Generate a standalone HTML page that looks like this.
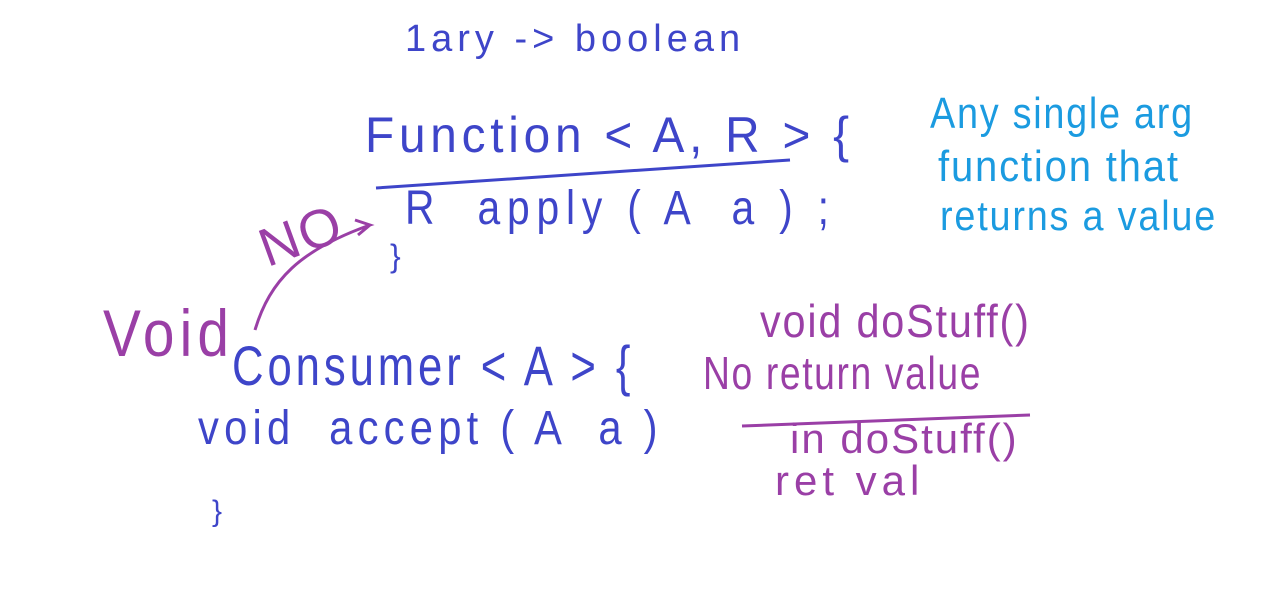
<!DOCTYPE html>
<html><head><meta charset="utf-8"><style>
html,body{margin:0;padding:0;background:#fff;width:1268px;height:590px;overflow:hidden;position:relative}
.t{position:absolute;font-family:"Liberation Sans",sans-serif;white-space:nowrap;line-height:1;letter-spacing:2px;transform-origin:0 0}
.b{color:#3e45c9}.p{color:#9a3fa6}.c{color:#1b9be0}
</style></head><body>
<div class="t b" style="left:405px;top:20px;font-size:38px;letter-spacing:5px">1ary -&gt; boolean</div>
<div class="t b" style="left:365px;top:110px;font-size:50px;letter-spacing:5px;transform:scaleX(0.955)">Function &lt; A, R &gt; {</div>
<div class="t b" style="left:405px;top:185px;font-size:48px;letter-spacing:8px;transform:scaleX(0.85)">R &nbsp;apply ( A &nbsp;a ) ;</div>
<div class="t b" style="left:390px;top:240px;font-size:32px">}</div>
<div class="t p" style="left:252px;top:225px;font-size:54px;transform:rotate(-20deg)">NO</div>
<div class="t p" style="left:103px;top:300px;font-size:66px;letter-spacing:6px;transform:scaleX(0.86)">Void</div>
<div class="t b" style="left:232px;top:338px;font-size:56px;letter-spacing:5px;transform:scaleX(0.78)">Consumer &lt; A &gt; {</div>
<div class="t b" style="left:198px;top:405px;font-size:48px;letter-spacing:6px;transform:scaleX(0.87)">void &nbsp;accept ( A &nbsp;a )</div>
<div class="t b" style="left:212px;top:497px;font-size:30px">}</div>
<div class="t c" style="left:930px;top:92px;font-size:44px;transform:scaleX(0.86)">Any single arg</div>
<div class="t c" style="left:938px;top:145px;font-size:44px;transform:scaleX(0.91)">function that</div>
<div class="t c" style="left:940px;top:195px;font-size:42px;transform:scaleX(0.9)">returns a value</div>
<div class="t p" style="left:760px;top:298px;font-size:46px;transform:scaleX(0.9)">void doStuff()</div>
<div class="t p" style="left:703px;top:350px;font-size:46px;transform:scaleX(0.81)">No return value</div>
<div class="t p" style="left:790px;top:418px;font-size:42px">in doStuff()</div>
<div class="t p" style="left:775px;top:460px;font-size:42px;letter-spacing:5px">ret val</div>
<svg width="1268" height="590" style="position:absolute;left:0;top:0">
<path d="M376 188 L790 160" stroke="#3e45c9" stroke-width="3" fill="none"/>
<path d="M742 426 L1030 415" stroke="#9a3fa6" stroke-width="3" fill="none"/>
<path d="M255 330 C270 280 300 250 370 225 L355 220 M370 225 L358 235" stroke="#9a3fa6" stroke-width="3" fill="none"/>
</svg>
</body></html>
